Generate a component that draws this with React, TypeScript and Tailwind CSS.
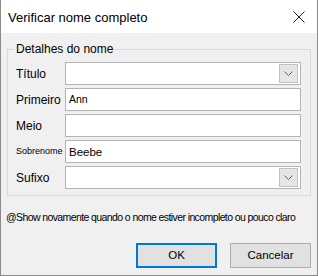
import React from 'react';

const Chevron = () => (
  <svg width="9" height="5" viewBox="0 0 9 5" fill="none">
    <path d="M0.5 0.5 L4.5 4.5 L8.5 0.5" stroke="#606060" strokeWidth="1" />
  </svg>
);

const Combo = () => (
  <div className="h-[23px] bg-white border border-[#b4b4b4] flex justify-end p-[1px] pr-[2px]">
    <div className="w-[19px] h-full bg-[#e6e6e6] border border-[#c2c2c2] flex items-center justify-center">
      <Chevron />
    </div>
  </div>
);

const TextBox = ({ value, size }: { value?: string; size?: string }) => (
  <div className={`h-[23px] bg-white border border-[#b4b4b4] flex items-center pl-[3px] text-black ${size ?? 'text-[11px]'}`}>
    {value}
  </div>
);

const App = () => {
  return (
    <div
      className="w-[318px] h-[276px] bg-[#f0f0f0] border border-[#8a8a8a] border-t-0 flex flex-col text-black"
      style={{ fontFamily: '"Liberation Sans", Arial, sans-serif' }}
    >
      <div className="h-[33px] bg-white flex items-center justify-between pl-[7px] pr-[12px]">
        <span className="text-[13px] pt-[2px]">Verificar nome completo</span>
        <svg width="12" height="12" viewBox="0 0 12 12">
          <path d="M0.5 0.5 L11.5 11.5 M11.5 0.5 L0.5 11.5" stroke="#222" strokeWidth="1" />
        </svg>
      </div>

      <div className="flex-1 flex flex-col px-[6px]">
        <fieldset className="mt-[9px] border border-[#d9d9d9] pl-[8px] pr-[9px] pt-[6px] pb-[6px]">
          <legend className="-ml-[2px] px-[2px] text-[12px] leading-[14px]">Detalhes do nome</legend>
          <div className="grid grid-cols-[49px_1fr] gap-y-[3px] items-center text-[12px]">
            <span>Título</span>
            <Combo />
            <span>Primeiro</span>
            <TextBox value="Ann" size="text-[10.5px]" />
            <span>Meio</span>
            <TextBox />
            <span className="text-[9px]">Sobrenome</span>
            <TextBox value="Beebe" size="text-[11.5px] pt-[2px]" />
            <span>Sufixo</span>
            <Combo />
          </div>
        </fieldset>

        <p className="mt-[14px] -ml-[1px] text-[10.5px] tracking-[-0.6px] leading-[14px] whitespace-nowrap">
          @Show novamente quando o nome estiver incompleto ou pouco claro
        </p>

        <div className="mt-auto mb-[7px] flex justify-end gap-[13px]">
          <button className="w-[81px] h-[25px] bg-[#e1e1e1] border-2 border-[#0078d7] text-[11.5px]">OK</button>
          <button className="w-[81px] h-[25px] bg-[#e1e1e1] border border-[#adadad] text-[11.5px]">Cancelar</button>
        </div>
      </div>
    </div>
  );
};

export default App;
